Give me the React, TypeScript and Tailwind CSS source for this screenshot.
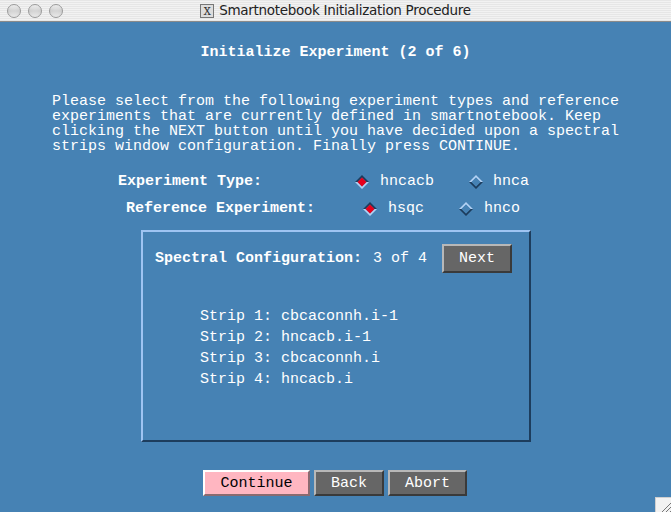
import React from "react";

const mono = { fontFamily: '"Liberation Mono", "DejaVu Sans Mono", monospace' };

const Diamond: React.FC<{ on?: boolean }> = ({ on }) => (
  <svg width="14" height="14" viewBox="0 0 14 14" className="shrink-0">
    <polygon
      points="0,7 7,0 14,7 11.5,7 7,2.5 2.5,7"
      fill={on ? "#1c3c5c" : "#b4d2f4"}
    />
    <polygon
      points="0,7 7,14 14,7 11.5,7 7,11.5 2.5,7"
      fill={on ? "#b4d2f4" : "#1c3c5c"}
    />
    <polygon points="2.5,7 7,2.5 11.5,7 7,11.5" fill={on ? "#e8001c" : "#4682b4"} />
  </svg>
);

const TrafficLight = () => (
  <div className="w-[14px] h-[14px] rounded-full border border-[#9a9a9a] bg-gradient-to-b from-[#f6f6f6] via-[#d4d4d4] to-[#eaeaea] shadow-inner" />
);

export default function App() {
  return (
    <div className="w-[671px] h-[512px] flex flex-col overflow-hidden relative" style={mono}>
      {/* Title bar */}
      <div className="h-[22px] shrink-0 relative flex items-center border-b border-[#8a8a8a] bg-[repeating-linear-gradient(0deg,#e6e6e6_0px,#e6e6e6_1px,#f2f2f2_1px,#f2f2f2_2px)]">
        <div className="flex gap-[7px] pl-[7px]">
          <TrafficLight />
          <TrafficLight />
          <TrafficLight />
        </div>
        <div
          className="absolute inset-0 flex items-center justify-center gap-[5px] text-[13px] text-[#222]"
          style={{ fontFamily: '"DejaVu Sans", "Liberation Sans", sans-serif' }}
        >
          <span className="w-[14px] h-[14px] border border-[#777] bg-[#ddd] text-[12px] leading-[12px] text-center font-serif text-[#333]">
            X
          </span>
          <span className="text-[13.5px] tracking-[-0.3px]">Smartnotebook Initialization Procedure</span>
        </div>
      </div>

      {/* Content */}
      <div className="flex-1 bg-[#4682b4] text-white text-[15px] leading-[15px] flex flex-col">
        <h1 className="mt-[23px] text-center font-bold text-[15px] leading-[15px]">
          Initialize Experiment (2 of 6)
        </h1>

        <p className="mt-[34px] ml-[52px] w-[600px] whitespace-pre leading-[15px]">
          {"Please select from the following experiment types and reference\nexperiments that are currently defined in smartnotebook. Keep\nclicking the NEXT button until you have decided upon a spectral\nstrips window configuration. Finally press CONTINUE."}
        </p>

        {/* Experiment type */}
        <div className="mt-[20px] flex items-center h-[15px]">
          <span className="ml-[118px] font-bold">Experiment Type:</span>
          <span className="ml-[93px]"><Diamond on /></span>
          <span className="ml-[11px]">hncacb</span>
          <span className="ml-[35px]"><Diamond /></span>
          <span className="ml-[10px]">hnca</span>
        </div>

        <div className="mt-[12px] flex items-center h-[15px]">
          <span className="ml-[126px] font-bold">Reference Experiment:</span>
          <span className="ml-[48px]"><Diamond on /></span>
          <span className="ml-[11px]">hsqc</span>
          <span className="ml-[35px]"><Diamond /></span>
          <span className="ml-[11px]">hnco</span>
        </div>

        {/* Spectral configuration panel */}
        <div className="mt-[14px] ml-[141px] w-[390px] h-[212px] border-2 border-t-[#9fc4f2] border-l-[#9fc4f2] border-b-[#1d3d5d] border-r-[#1d3d5d] flex flex-col">
          <div className="mt-[12px] flex items-center">
            <span className="ml-[12px] font-bold">Spectral Configuration:</span>
            <span className="ml-[11px]">3 of 4</span>
            <button className="ml-[15px] w-[70px] h-[29px] bg-[#666666] text-white border-2 border-t-[#b8b8b8] border-l-[#b8b8b8] border-b-[#3a3a3a] border-r-[#3a3a3a] text-[15px]">
              Next
            </button>
          </div>
          <div className="mt-[33px] ml-[57px] flex flex-col leading-[21px]">
            <span>Strip 1: cbcaconnh.i-1</span>
            <span>Strip 2: hncacb.i-1</span>
            <span>Strip 3: cbcaconnh.i</span>
            <span>Strip 4: hncacb.i</span>
          </div>
        </div>

        {/* Bottom buttons */}
        <div className="mt-[28px] ml-[203px] flex gap-[4px]">
          <button className="w-[107px] h-[26px] bg-[#ffb6c1] text-black border-2 border-t-white border-l-white border-b-[#8a6a70] border-r-[#8a6a70] text-[15px]">
            Continue
          </button>
          <button className="w-[70px] h-[26px] bg-[#666666] text-white border-2 border-t-[#b8b8b8] border-l-[#b8b8b8] border-b-[#3a3a3a] border-r-[#3a3a3a] text-[15px]">
            Back
          </button>
          <button className="w-[79px] h-[26px] bg-[#666666] text-white border-2 border-t-[#b8b8b8] border-l-[#b8b8b8] border-b-[#3a3a3a] border-r-[#3a3a3a] text-[15px]">
            Abort
          </button>
        </div>
      </div>

      {/* Resize grip */}
      <div className="absolute right-0 bottom-0 w-[16px] h-[15px] bg-[#f2f2f2] border-l border-t border-[#cfcfcf]">
        <svg width="16" height="15" viewBox="0 0 16 15">
          <line x1="5" y1="15" x2="16" y2="4" stroke="#777" strokeWidth="1" />
          <line x1="9" y1="15" x2="16" y2="8" stroke="#777" strokeWidth="1" />
          <line x1="13" y1="15" x2="16" y2="12" stroke="#777" strokeWidth="1" />
        </svg>
      </div>
    </div>
  );
}
